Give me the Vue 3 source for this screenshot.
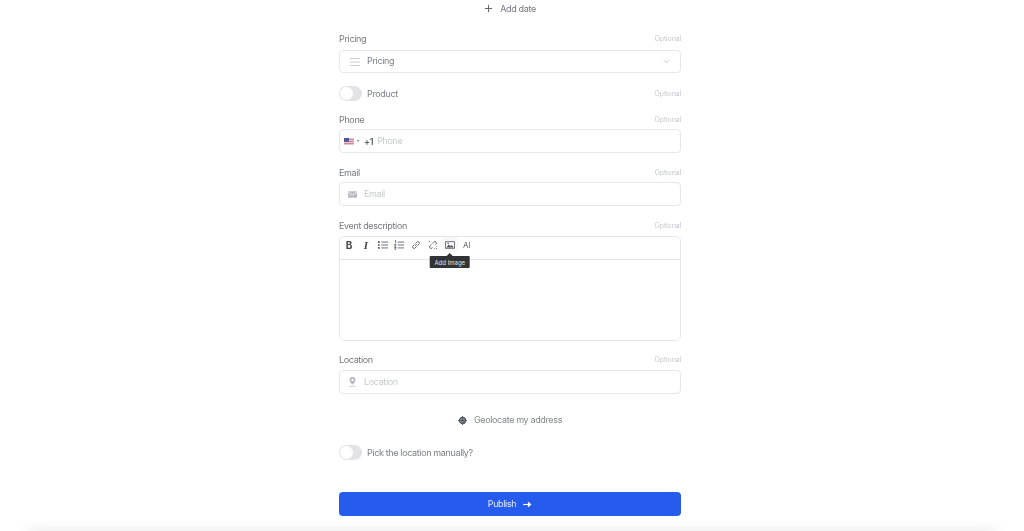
<template>
  <div class="page">
    <form class="form" @submit.prevent>
      <button type="button" class="add-date">
        <svg viewBox="0 0 10 10" width="9" height="9"><path d="M5 1v8M1 5h8" stroke="#555a64" stroke-width="1" fill="none" /></svg>
        <span>Add date</span>
      </button>

      <div class="field pricing">
        <div class="label-row"><label>Pricing</label><span class="optional">Optional</span></div>
        <div class="box select">
          <svg class="lead" viewBox="0 0 10 8" width="10" height="8"><path d="M0 .5h10M0 4h10M0 7.5h10" stroke="#c9ccd1" stroke-width="1" fill="none" /></svg>
          <span class="value">Pricing</span>
          <svg class="chevron" viewBox="0 0 8 5" width="7" height="5"><path d="M1 1l3 3 3-3" stroke="#b4b7bd" stroke-width=".8" fill="none" /></svg>
        </div>
      </div>

      <div class="toggle-row product">
        <span class="toggle"><i></i></span>
        <span class="toggle-text">Product</span>
        <span class="optional push">Optional</span>
      </div>

      <div class="field">
        <div class="label-row"><label>Phone</label><span class="optional">Optional</span></div>
        <div class="box phone">
          <svg class="flag" viewBox="0 0 10 7" width="10" height="7">
            <rect width="10" height="7" fill="#e9c6cb" />
            <path d="M0 1.5h10M0 3.5h10M0 5.5h10" stroke="#c9707e" stroke-width=".7" />
            <rect width="5" height="3.8" fill="#4a5a94" />
          </svg>
          <span class="caret"></span>
          <span class="dial">+1</span>
          <span class="placeholder">Phone</span>
        </div>
      </div>

      <div class="field">
        <div class="label-row"><label>Email</label><span class="optional">Optional</span></div>
        <div class="box">
          <svg class="lead" viewBox="0 0 10 7" width="9" height="7"><rect width="10" height="7" rx=".6" fill="#b9bcc3" /><path d="M0 1l5 3 5-3" stroke="#fff" stroke-width=".8" fill="none" /></svg>
          <span class="placeholder">Email</span>
        </div>
      </div>

      <div class="field">
        <div class="label-row"><label>Event description</label><span class="optional">Optional</span></div>
        <div class="editor">
          <div class="toolbar">
            <span class="tool bold">B</span>
            <span class="tool italic">I</span>
            <span v-for="icon in tools" :key="icon.name" class="tool" :class="{ active: icon.name === 'image' }">
              <svg viewBox="0 0 12 12" width="10" height="10" fill="none" stroke="#50545c" stroke-width="1">
                <path :d="icon.d" />
                <path v-if="icon.fill" :d="icon.fill" fill="#50545c" stroke="none" />
              </svg>
              <span v-if="icon.name === 'image'" class="tooltip">Add Image</span>
            </span>
            <span class="tool ai">AI</span>
          </div>
          <div class="editor-body"></div>
        </div>
      </div>

      <div class="field location">
        <div class="label-row"><label>Location</label><span class="optional">Optional</span></div>
        <div class="box">
          <svg class="lead" viewBox="0 0 10 11" width="9" height="10">
            <path d="M5 0a3.3 3.3 0 0 0-3.3 3.3C1.700 5.500 5 8.500 5 8.500s3.300-3 3.300-5.200A3.300 3.300 0 0 0 5 0z" fill="#b4b7bd" />
            <circle cx="5" cy="3.300" r="1.300" fill="#fff" />
            <path d="M1 10.300h8" stroke="#c9ccd1" stroke-width=".9" />
          </svg>
          <span class="placeholder">Location</span>
        </div>
      </div>

      <button type="button" class="geo">
        <svg viewBox="0 0 10 10" width="9" height="9">
          <circle cx="5" cy="5" r="3.400" fill="#8a8d94" stroke="#4a4e57" stroke-width="1.300" />
          <circle cx="5" cy="5" r="1.300" fill="#4a4e57" />
          <path d="M5 0v2M5 8v2M0 5h2M8 5h2" stroke="#4a4e57" stroke-width="1" />
        </svg>
        <span>Geolocate my address</span>
      </button>

      <div class="toggle-row manual">
        <span class="toggle"><i></i></span>
        <span class="toggle-text">Pick the location manually?</span>
      </div>

      <button type="submit" class="publish">
        <span>Publish</span>
        <svg viewBox="0 0 10 8" width="9" height="7"><path d="M0 4h6" stroke="#fff" stroke-width="1.300" /><path d="M5.500 .6L9.500 4 5.500 7.400z" fill="#fff" /></svg>
      </button>
    </form>
    <div class="bottom-shadow"></div>
  </div>
</template>

<script setup>
const tools = [
  { name: 'bullets', d: 'M4 2.500h8M4 6h8M4 9.500h8', fill: 'M0 1.500h2v2H0zM0 5h2v2H0zM0 8.500h2v2H0z' },
  { name: 'numbers', d: 'M4.500 2.500H12M4.500 6H12M4.500 9.500H12M1 1l1-.5V4M.5 5.500h2L.5 7.500h2M.5 9h2l-1 1 1 1h-2' },
  { name: 'link', d: 'M5 7l2-2M4.300 5.200L2.200 7.300a1.800 1.800 0 0 0 2.500 2.500l2.100-2.100M5.200 4.300l2.100-2.100a1.800 1.800 0 0 1 2.500 2.500L7.700 6.800' },
  { name: 'unlink', d: 'M4.300 5.200L2.200 7.300a1.800 1.800 0 0 0 2.500 2.500l.8-.8M5.200 4.300l2.100-2.100a1.800 1.800 0 0 1 2.500 2.500l-.8.8M1 1l1.500 1.500M9.500 9.500L11 11M8 10V11M10 8H11' },
  { name: 'image', d: 'M.5 2h11v8H.5z', fill: 'M1.500 9l3-3.500 2 2 1.500-1.500 2.500 3zM3 3.200h1.500v1.500H3z' }
]
</script>

<style>
html, body {
  margin: 0;
  background: #fff;
}
</style>

<style scoped>
.page {
  position: relative;
  height: 531px;
  overflow: hidden;
  box-sizing: border-box;
  padding-right: 4px;
  background: #fff;
  font-family: Inter, "Liberation Sans", sans-serif;
  font-size: 9px;
  letter-spacing: -0.04em;
  color: #74777f;
}

.form {
  width: 342px;
  margin: 0 auto;
  padding-top: 3px;
  display: flex;
  flex-direction: column;
  opacity: 0.999;
}

button {
  font: inherit;
  letter-spacing: inherit;
  border: 0;
  background: none;
  padding: 0;
  color: inherit;
}

.add-date {
  height: 11px;
  display: flex;
  align-items: center;
  justify-content: center;
  gap: 7px;
  margin-bottom: 19px;
}

.field {
  display: flex;
  flex-direction: column;
  margin-bottom: 14px;
}

.label-row {
  height: 11px;
  display: flex;
  align-items: center;
  justify-content: space-between;
  margin-bottom: 4px;
}

.optional {
  font-size: 7px;
  letter-spacing: -0.02em;
  color: #c6c8cc;
}

.box {
  height: 24px;
  box-sizing: border-box;
  border: 1px solid #e6e7ea;
  border-radius: 4px;
  display: flex;
  align-items: center;
  padding-left: 8px;
  padding-right: 10px;
}

.lead {
  margin-right: 7px;
  flex: none;
}

.pricing {
  margin-bottom: 13px;
}

.pricing .label-row {
  margin-bottom: 6px;
}

.select {
  height: 23px;
  padding-left: 10px;
}

.value {
  color: #7a7d85;
  margin-bottom: 2px;
}

.chevron {
  margin-left: auto;
}

.placeholder {
  color: #c6c8cd;
  margin-bottom: 1px;
}

.phone {
  padding-left: 4px;
}

.caret {
  width: 0;
  height: 0;
  margin: 0 5px 0 3px;
  border-left: 1.5px solid transparent;
  border-right: 1.5px solid transparent;
  border-top: 2px solid #6b6f78;
}

.dial {
  margin-right: 4px;
  color: #5a5e66;
  font-weight: 600;
}

.toggle-row {
  display: flex;
  align-items: center;
  gap: 5px;
}

.toggle {
  width: 23px;
  height: 15px;
  border-radius: 8px;
  background: #e2e3e5;
  display: flex;
  align-items: center;
  padding-left: 1px;
  box-sizing: border-box;
}

.toggle i {
  width: 13px;
  height: 13px;
  border-radius: 50%;
  background: #fff;
}

.toggle-text {
  color: #7a7d85;
}

.push {
  margin-left: auto;
}

.product {
  margin-bottom: 13px;
}

.editor {
  height: 105px;
  margin-top: 1px;
  border: 1px solid #e6e7ea;
  border-radius: 5px;
  display: flex;
  flex-direction: column;
  box-sizing: border-box;
}

.toolbar {
  height: 23px;
  flex: none;
  box-sizing: border-box;
  border-bottom: 1px solid #e6e7ea;
  display: flex;
  align-items: flex-start;
  padding-left: 1px;
  gap: 0.8px;
}

.tool {
  position: relative;
  width: 16px;
  height: 15px;
  display: flex;
  align-items: center;
  justify-content: center;
  border-radius: 2px;
  color: #44484f;
}

.tool.active {
  background: #f8f8f9;
}

.bold {
  font-weight: 700;
  font-size: 10px;
}

.italic {
  font-style: italic;
  font-weight: 700;
  font-size: 11px;
  font-family: "Liberation Serif", serif;
}

.ai {
  font-size: 8px;
  color: #62666e;
}

.tooltip {
  position: absolute;
  top: 19px;
  left: 50%;
  transform: translateX(-50%);
  padding: 0 5px;
  height: 12px;
  display: flex;
  align-items: center;
  background: #323336;
  color: #e4e4e4;
  font-size: 6px;
  letter-spacing: 0;
  white-space: nowrap;
  border-radius: 1px;
  z-index: 2;
}

.tooltip::before {
  content: "";
  position: absolute;
  top: -3px;
  left: 50%;
  margin-left: -3px;
  border-left: 3px solid transparent;
  border-right: 3px solid transparent;
  border-bottom: 3px solid #323336;
}

.editor-body {
  flex: 1;
}

.location {
  margin-bottom: 0;
  margin-top: -1px;
}

.location .label-row {
  margin-bottom: 5px;
}

.geo {
  display: flex;
  align-items: center;
  justify-content: center;
  gap: 7px;
  height: 12px;
  margin-top: 20px;
  color: #82858c;
}

.geo span {
  margin-bottom: 1px;
}

.manual {
  margin-top: 19px;
}

.publish {
  margin-top: 32px;
  height: 24px;
  border-radius: 4px;
  background: #265ced;
  color: #e6ecff;
  display: flex;
  align-items: center;
  justify-content: center;
  gap: 7px;
}

.publish span {
  margin-bottom: 1px;
}

.bottom-shadow {
  position: absolute;
  left: 30px;
  right: 30px;
  top: 533px;
  height: 20px;
  box-shadow: 0 0 14px 2px rgba(0, 0, 0, 0.1);
}
</style>
